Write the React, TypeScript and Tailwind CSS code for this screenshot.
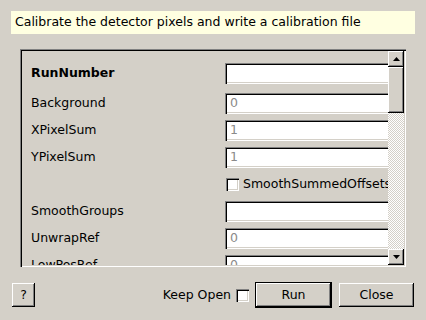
import React from 'react';

const raised =
  'bg-[#d4d0c8] shadow-[inset_-1px_-1px_#000,inset_1px_1px_#fff,inset_-2px_-2px_#808080]';
const sunken =
  'bg-white shadow-[inset_1px_1px_#808080,inset_2px_2px_#000,inset_-1px_-1px_#fff,inset_-2px_-2px_#d4d0c8]';

function Field({ value }: { value?: string }) {
  return (
    <div className={`ml-[194px] h-[21px] w-[200px] shrink-0 ${sunken} flex items-center pl-[5px] text-[#8a8a8a]`}>
      {value}
    </div>
  );
}

function Row({ label, value, bold, first }: { label: string; value?: string; bold?: boolean; first?: boolean }) {
  return (
    <div className={`flex h-[21px] items-center ${first ? 'mb-[9px]' : 'mb-[6px]'}`}>
      <div className={`w-0 whitespace-nowrap pl-[9px] ${bold ? 'font-bold' : ''}`}>{label}</div>
      <Field value={value} />
    </div>
  );
}

function Arrow({ up }: { up?: boolean }) {
  return (
    <div className={`h-[16px] w-[16px] ${raised} flex items-center justify-center`}>
      <svg width="7" height="4" viewBox="0 0 7 4">
        {up ? <polygon points="3.5,0 7,4 0,4" fill="#000" /> : <polygon points="0,0 7,0 3.5,4" fill="#000" />}
      </svg>
    </div>
  );
}

export default function App() {
  return (
    <div className="h-[320px] w-[426px] overflow-hidden bg-[#d4d0c8] font-['DejaVu_Sans',sans-serif] text-[12.5px] text-black">
      <div className="ml-[11px] mt-[11px] flex h-[23px] w-[404px] items-center bg-[#ffffe1] pl-[4px]">
        Calibrate the detector pixels and write a calibration file
      </div>

      <div className="ml-[20px] mt-[15px] flex h-[218px] w-[386px] p-[2px] shadow-[inset_1px_1px_#808080,inset_2px_2px_#000,inset_-1px_-1px_#fff,inset_-2px_-2px_#d4d0c8]">
        <div className="flex-1 overflow-hidden pt-[12px]">
          <Row label="RunNumber" bold first />
          <Row label="Background" value="0" />
          <Row label="XPixelSum" value="1" />
          <Row label="YPixelSum" value="1" />
          <div className="mb-[6px] flex h-[21px] items-center">
            <div className={`ml-[204px] h-[13px] w-[13px] shrink-0 ${sunken}`} />
            <span className="ml-[4px] whitespace-nowrap">SmoothSummedOffsets</span>
          </div>
          <Row label="SmoothGroups" />
          <Row label="UnwrapRef" value="0" />
          <Row label="LowPosRef" value="0" />
        </div>
        <div className="flex w-[16px] flex-col">
          <Arrow up />
          <div className={`h-[46px] ${raised}`} />
          <div className="flex-1 bg-[repeating-conic-gradient(#d4d0c8_0%_25%,#fff_0%_50%)] bg-[length:2px_2px]" />
          <Arrow />
        </div>
      </div>

      <div className="mt-[15px] flex items-center pl-[12px] pr-[12px]">
        <button className={`h-[24px] w-[23px] ${raised}`}>?</button>
        <div className="flex-1" />
        <span>Keep Open</span>
        <div className={`ml-[5px] h-[13px] w-[13px] ${sunken}`} />
        <div className="ml-[6px] border border-black">
          <button className={`block h-[24px] w-[75px] ${raised}`}>Run</button>
        </div>
        <button className={`ml-[7px] h-[24px] w-[75px] ${raised}`}>Close</button>
      </div>
    </div>
  );
}
